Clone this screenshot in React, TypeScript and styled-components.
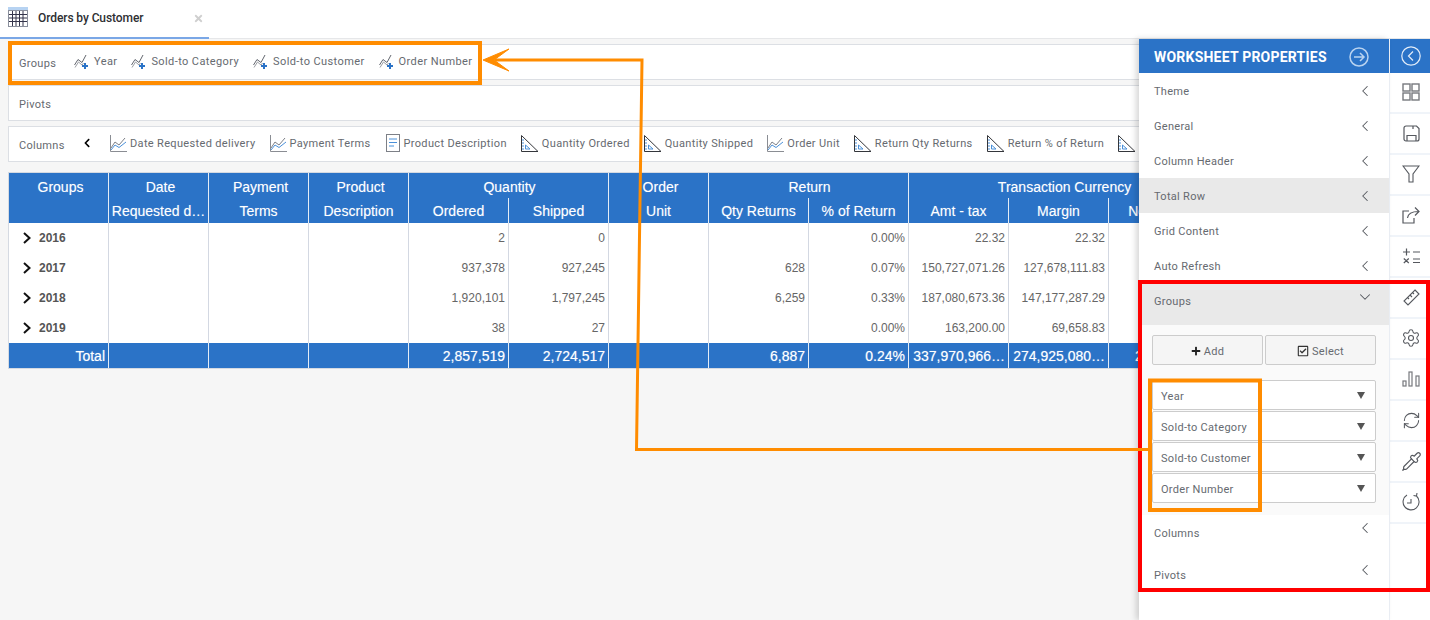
import React from 'react';
import styled, { createGlobalStyle } from 'styled-components';
import { ChevronDown, ChevronLeft, Settings, RefreshCw, Pipette } from 'lucide-react';
import { FaPlus, FaRegCheckSquare, FaChevronLeft, FaTimes } from 'react-icons/fa';

const GlobalStyle = createGlobalStyle`
    html, body {
        margin: 0;
        padding: 0;
        background: #f6f6f6;
    }
    * {
        box-sizing: border-box;
    }
`;

const uiFont = `Roboto, "Liberation Sans", sans-serif`;
const tableFont = `"Liberation Sans", Arial, sans-serif`;

const Page = styled.div`
    position: relative;
    width: 1430px;
    height: 620px;
    overflow: hidden;
    display: flex;
    flex-direction: column;
    background: #f6f6f6;
    font-family: ${uiFont};
`;

const TabBar = styled.div`
    flex: none;
    height: 39px;
    background: #fff;
    border-bottom: 1px solid #e6e7e9;
`;
const Tab = styled.div`
    width: 209px;
    height: 39px;
    display: flex;
    align-items: center;
    padding: 0 5px 3px 8px;
    border-bottom: 2px solid #7aa7e6;
`;
const TabTitle = styled.span`
    margin: 1px 0 0 10px;
    font-size: 12px;
    font-weight: 500;
    color: #2e2f33;
    letter-spacing: -0.09px;
    flex: 1;
`;
const TabClose = styled.span`
    display: flex;
    color: #cfcfcf;
    font-size: 11px;
    margin-top: 3px;
`;

const Body = styled.div`
    flex: 1;
    display: flex;
    min-height: 0;
`;
const Workspace = styled.div`
    width: 1139px;
    flex: none;
    overflow: hidden;
    padding: 5px 0 0 8px;
`;
const Toolbar = styled.div`
    width: 1160px;
    height: 36px;
    margin-bottom: 5px;
    display: flex;
    align-items: center;
    padding-left: 10px;
    background: #fff;
    border: 1px solid #dcdfe4;
    overflow: hidden;
    white-space: nowrap;
`;
const ToolbarLabel = styled.span<{ $width: number }>`
    flex: none;
    width: ${p => p.$width}px;
    font-size: 11px;
    letter-spacing: 0.3px;
    color: #666a70;
    padding-top: 2px;
`;
const ToolbarChevron = styled.span`
    display: flex;
    width: 28px;
    flex: none;
    font-size: 10px;
    color: #000;
    margin-top: -3px;
`;
const ToolItem = styled.span<{ $gap: number; $spacing: number }>`
    flex: none;
    display: flex;
    align-items: center;
    gap: ${p => p.$gap}px;
    margin-right: 14px;
    font-size: 11px;
    letter-spacing: ${p => p.$spacing}px;
    color: #666a70;
    margin-top: -2px;
`;

const TableWrap = styled.div`
    width: 1160px;
    margin-top: 10px;
    overflow: hidden;
    border: 1px solid #d5dae2;
    border-right: 0;
`;
const Grid = styled.table`
    width: 1200px;
    table-layout: fixed;
    border-collapse: separate;
    border-spacing: 0;
    font-family: ${tableFont};
`;
const HeadCell = styled.th<{ $left?: number; $right?: number }>`
    height: 25px;
    padding: 3px ${p => p.$right ?? 1}px 0 ${p => p.$left ?? 5}px;
    background: #2b73c7;
    color: #fff;
    font-size: 14px;
    font-weight: 400;
    text-align: center;
    border-right: 1px solid #e4ecf6;
    white-space: nowrap;
    overflow: hidden;
    text-shadow: 0 0 1px rgba(255, 255, 255, 0.35);
`;
const SubHeadCell = styled(HeadCell)`
    padding: 1px 2px 0;
`;
const Cell = styled.td`
    height: 30px;
    padding: 0 3px;
    background: #fff;
    color: #666;
    font-size: 12px;
    text-align: right;
    border-right: 1px solid #d3d8e2;
    white-space: nowrap;
    overflow: hidden;
`;
const YearCell = styled(Cell)`
    text-align: left;
    padding-left: 13px;
    color: #555;
    font-weight: 700;
`;
const YearInner = styled.span`
    display: flex;
    align-items: center;
    gap: 7px;
`;
const TotalCell = styled.td`
    height: 25px;
    padding: 0 3px;
    background: #2b73c7;
    color: #fff;
    font-size: 14px;
    font-weight: 400;
    text-align: right;
    border-right: 1px solid #e4ecf6;
    white-space: nowrap;
    overflow: hidden;
    text-shadow: 0 0 1px rgba(255, 255, 255, 0.5);
`;

const Panel = styled.aside`
    position: relative;
    z-index: 1;
    flex: none;
    width: 250px;
    background: #fff;
    box-shadow: -3px 0 6px rgba(0, 0, 0, 0.16);
`;
const PanelHeader = styled.div`
    height: 34px;
    display: flex;
    align-items: center;
    justify-content: space-between;
    padding: 2px 20px 0 15px;
    background: #2b73c7;
    color: #fff;
    font-size: 14px;
    font-weight: 700;
    letter-spacing: 0.22px;
`;
const SectionRow = styled.div<{ $active?: boolean }>`
    height: 35px;
    display: flex;
    align-items: center;
    justify-content: space-between;
    padding: 0 15px;
    background: ${p => (p.$active ? '#e9e9e9' : '#fff')};
    color: #666a70;
    font-size: 11px;
    letter-spacing: 0.3px;
`;
const SectionLabel = styled.span`
    margin-top: 2px;
`;
const TallRow = styled(SectionRow)`
    height: 42px;
    align-items: flex-start;
    padding-top: 10px;
`;
const RowChevron = styled.span`
    display: flex;
    color: #55585e;
    margin-right: 0;
`;
const TallChevron = styled(RowChevron)<{ $lift: number }>`
    margin-top: -${p => p.$lift}px;
`;
const GroupsBody = styled.div`
    height: 190px;
    padding: 10px 13px 0;
    background: #fafafa;
`;
const ButtonRow = styled.div`
    display: flex;
    gap: 2px;
    margin-bottom: 15px;
`;
const PanelButton = styled.button`
    flex: 1;
    height: 30px;
    display: flex;
    align-items: center;
    justify-content: center;
    gap: 3px;
    padding: 2px 0 0;
    background: #f5f5f5;
    border: 1px solid #ccc;
    border-radius: 2px;
    color: #666a70;
    font-family: ${uiFont};
    font-size: 11px;
    letter-spacing: 0.3px;
`;
const AddGlyph = styled.span`
    display: flex;
    color: #222;
    font-size: 10px;
`;
const SelectGlyph = styled.span`
    display: flex;
    color: #333;
    font-size: 12px;
`;
const SelectBox = styled.div`
    height: 30px;
    margin-bottom: 1px;
    display: flex;
    align-items: center;
    justify-content: space-between;
    padding: 3px 10px 0 8px;
    background: #fff;
    border: 1px solid #ccc;
    border-radius: 2px;
    color: #666a70;
    font-size: 11px;
    letter-spacing: 0.3px;
`;
const Caret = styled.span`
    width: 0;
    height: 0;
    margin-top: -3px;
    border-left: 4px solid transparent;
    border-right: 4px solid transparent;
    border-top: 7px solid #555;
`;

const Rail = styled.nav`
    flex: none;
    width: 41px;
    background: #fff;
    border-left: 1px solid #eef2f8;
`;
const RailHead = styled.div`
    height: 34px;
    display: flex;
    align-items: center;
    justify-content: center;
    padding-left: 2px;
    background: #2b73c7;
`;
const RailItem = styled.div`
    height: 41px;
    display: flex;
    align-items: center;
    justify-content: center;
    padding: 0 0 1px 2px;
    border-bottom: 2px solid #f0f4f9;
    color: #55585e;
`;

const Annotations = styled.svg`
    position: absolute;
    left: 0;
    top: 0;
    z-index: 2;
    pointer-events: none;
`;

const GridIcon = () => (
    <svg width="20" height="20" viewBox="0 0 20 20">
        <rect x="0" y="0" width="20" height="20" fill="#8a8f9c" />
        <rect x="0" y="0" width="20" height="3" fill="#b7d3f2" />
        <rect x="1" y="4" width="18" height="15" fill="#fff" />
        <path d="M1 7.5h18M1 11h18M1 14.5h18M4.5 4v15M8 4v15M11.5 4v15M15 4v15" stroke="#34344a" strokeWidth="1" fill="none" />
    </svg>
);

const GroupIcon = () => (
    <svg width="15" height="15" viewBox="0 0 15 15" fill="none">
        <path d="M0.5 11 L4 5.5 L8 8.5 L12 1" stroke="#62666e" strokeWidth="1" />
        <path d="M1 13.5 L4.5 8 L8 11 L9.5 9" stroke="#9a9da3" strokeWidth="1" />
        <path d="M11 9v6M8 12h6" stroke="#2b73c7" strokeWidth="2" />
    </svg>
);

const ChartIcon = () => (
    <svg width="17" height="17" viewBox="0 0 17 17" fill="none">
        <path d="M0.5 0v16.5H17" stroke="#8a8d93" strokeWidth="1" />
        <path d="M1 13 L5 7 L9 10 L15 3" stroke="#7d8087" strokeWidth="1" />
        <path d="M1 15 L5 10 L9 12.5 L16 7" stroke="#4a90d9" strokeWidth="1" />
    </svg>
);

const DocIcon = () => (
    <svg width="16" height="18" viewBox="0 0 16 18" fill="none">
        <rect x="1.5" y="0.5" width="13" height="17" stroke="#7d8087" />
        <path d="M4 5h8M4 8.5h8M4 12h5" stroke="#4a90d9" strokeWidth="1" />
    </svg>
);

const SquareIcon = () => (
    <svg width="18" height="17" viewBox="0 0 18 17" fill="none">
        <path d="M0.5 0.5 L17 16.5 H0.5 Z" stroke="#34363b" strokeWidth="1" />
        <path d="M4.5 10 L9 14 H4.5 Z" stroke="#4a90d9" strokeWidth="1" />
        <path d="M1 5h2M1 8h2M1 11h2M1 14h2" stroke="#4a90d9" strokeWidth="1" />
    </svg>
);

const ExpandIcon = () => (
    <svg width="10" height="12" viewBox="0 0 10 12" fill="none">
        <path d="M2 1 L7.5 6 L2 11" stroke="#111" strokeWidth="2" />
    </svg>
);

const CircleArrow = () => (
    <svg width="20" height="20" viewBox="0 0 20 20" fill="none" stroke="#b9d3f0" strokeWidth="1.5">
        <circle cx="10" cy="10" r="9" />
        <path d="M5 10h10M11 6l4 4-4 4" />
    </svg>
);
const CircleBack = () => (
    <svg width="20" height="20" viewBox="0 0 20 20" fill="none" stroke="#e3edf9" strokeWidth="1.2">
        <circle cx="10" cy="10" r="9.2" />
        <path d="M12 5.5 L7.5 10 L12 14.5" />
    </svg>
);
const TilesIcon = () => (
    <svg width="18" height="18" viewBox="0 0 18 18" fill="none" stroke="#77797e" strokeWidth="1.4">
        <rect x="1" y="1" width="7" height="7" />
        <rect x="10" y="1" width="7" height="7" />
        <rect x="1" y="10" width="7" height="7" />
        <rect x="10" y="10" width="7" height="7" />
    </svg>
);
const SaveIcon = () => (
    <svg width="17" height="17" viewBox="0 0 17 17" fill="none" stroke="#55585e" strokeWidth="1.2">
        <path d="M3 1h10.5L16 3.5V14a2 2 0 0 1-2 2H3a2 2 0 0 1-2-2V3a2 2 0 0 1 2-2Z" />
        <path d="M4 16v-5.5h9V16M10 1v3" />
    </svg>
);
const FunnelIcon = () => (
    <svg width="18" height="18" viewBox="0 0 18 18" fill="none" stroke="#55585e" strokeWidth="1.1">
        <path d="M1 1h16l-6 8v8H7V9Z" />
    </svg>
);
const ShareIcon = () => (
    <svg width="18" height="18" viewBox="0 0 18 18" fill="none" stroke="#55585e" strokeWidth="1.2">
        <path d="M7 5H1v12h11v-5" />
        <path d="M5.5 12c.5-4 3.5-6.5 11-6.5M13 1.5l4 4-4 4" />
    </svg>
);
const MathIcon = () => (
    <svg width="18" height="16" viewBox="0 0 18 16" fill="none" stroke="#55585e" strokeWidth="1.2">
        <path d="M1 4h7M4.5 0.5v7M11 4h7M1.8 10.5l5 4.5M6.8 10.5l-5 4.5M11 11h7M11 14.5h7" />
    </svg>
);
const RulerIcon = () => (
    <svg width="17" height="17" viewBox="0 0 17 17" fill="none" stroke="#55585e" strokeWidth="1.1">
        <path d="M12 1 L16 5 L5 16 L1 12 Z" />
        <path d="M4.5 8.5l1.5 1.5M7 6l2 2M9.5 3.5l1.5 1.5" />
    </svg>
);
const BarsIcon = () => (
    <svg width="18" height="16" viewBox="0 0 18 16" fill="none" stroke="#77797e" strokeWidth="1.2">
        <rect x="1" y="10" width="3" height="5" />
        <rect x="7" y="1" width="3" height="14" />
        <rect x="14" y="5" width="3" height="10" />
    </svg>
);
const ClockIcon = () => (
    <svg width="18" height="18" viewBox="0 0 18 18" fill="none" stroke="#55585e" strokeWidth="1.1">
        <path d="M5 2a8 8 0 1 0 9.5 1M11.5 2.5l3 .5.5-3" />
        <path d="M9 6v4H5" />
    </svg>
);

const groupItems = ['Year', 'Sold-to Category', 'Sold-to Customer', 'Order Number'];

const columnItems: [string, React.FC][] = [
    ['Date Requested delivery', ChartIcon],
    ['Payment Terms', ChartIcon],
    ['Product Description', DocIcon],
    ['Quantity Ordered', SquareIcon],
    ['Quantity Shipped', SquareIcon],
    ['Order Unit', ChartIcon],
    ['Return Qty Returns', SquareIcon],
    ['Return % of Return', SquareIcon],
    ['', SquareIcon],
];

const sections = ['Theme', 'General', 'Column Header', 'Total Row', 'Grid Content', 'Auto Refresh'];

const rows = [
    { year: '2016', values: ['2', '0', '', '', '0.00%', '22.32', '22.32', ''] },
    { year: '2017', values: ['937,378', '927,245', '', '628', '0.07%', '150,727,071.26', '127,678,111.83', ''] },
    { year: '2018', values: ['1,920,101', '1,797,245', '', '6,259', '0.33%', '187,080,673.36', '147,177,287.29', ''] },
    { year: '2019', values: ['38', '27', '', '', '0.00%', '163,200.00', '69,658.83', ''] },
];
const totals = ['2,857,519', '2,724,517', '', '6,887', '0.24%', '337,970,966…', '274,925,080…', '245,586.77'];

const railIcons = [
    <TilesIcon />,
    <SaveIcon />,
    <FunnelIcon />,
    <ShareIcon />,
    <MathIcon />,
    <RulerIcon />,
    <Settings size={20} strokeWidth={1.3} />,
    <BarsIcon />,
    <RefreshCw size={19} strokeWidth={1.3} />,
    <Pipette size={21} strokeWidth={1.3} />,
    <ClockIcon />,
];

const App = () => (
    <Page>
        <GlobalStyle />
        <TabBar>
            <Tab>
                <GridIcon />
                <TabTitle>Orders by Customer</TabTitle>
                <TabClose><FaTimes /></TabClose>
            </Tab>
        </TabBar>
        <Body>
            <Workspace>
                <Toolbar>
                    <ToolbarLabel $width={55}>Groups</ToolbarLabel>
                    {groupItems.map(item => (
                        <ToolItem key={item} $gap={5} $spacing={0.4}><GroupIcon />{item}</ToolItem>
                    ))}
                </Toolbar>
                <Toolbar>
                    <ToolbarLabel $width={55}>Pivots</ToolbarLabel>
                </Toolbar>
                <Toolbar>
                    <ToolbarLabel $width={63}>Columns</ToolbarLabel>
                    <ToolbarChevron><FaChevronLeft /></ToolbarChevron>
                    {columnItems.map(([label, Icon], i) => (
                        <ToolItem key={i} $gap={3} $spacing={0.34}><Icon />{label}</ToolItem>
                    ))}
                </Toolbar>
                <TableWrap>
                    <Grid>
                        <colgroup>
                            {Array.from({ length: 12 }, (_, i) => <col key={i} width={100} />)}
                        </colgroup>
                        <thead>
                            <tr>
                                <HeadCell>Groups</HeadCell>
                                <HeadCell>Date</HeadCell>
                                <HeadCell>Payment</HeadCell>
                                <HeadCell>Product</HeadCell>
                                <HeadCell colSpan={2} $left={4} $right={2}>Quantity</HeadCell>
                                <HeadCell>Order</HeadCell>
                                <HeadCell colSpan={2} $left={4} $right={2}>Return</HeadCell>
                                <HeadCell colSpan={3} $left={15} $right={3}>Transaction Currency</HeadCell>
                            </tr>
                            <tr>
                                <SubHeadCell />
                                <SubHeadCell>Requested d…</SubHeadCell>
                                <SubHeadCell>Terms</SubHeadCell>
                                <SubHeadCell>Description</SubHeadCell>
                                <SubHeadCell>Ordered</SubHeadCell>
                                <SubHeadCell>Shipped</SubHeadCell>
                                <SubHeadCell>Unit</SubHeadCell>
                                <SubHeadCell>Qty Returns</SubHeadCell>
                                <SubHeadCell>% of Return</SubHeadCell>
                                <SubHeadCell>Amt - tax</SubHeadCell>
                                <SubHeadCell>Margin</SubHeadCell>
                                <SubHeadCell>Net Sales</SubHeadCell>
                            </tr>
                        </thead>
                        <tbody>
                            {rows.map(row => (
                                <tr key={row.year}>
                                    <YearCell>
                                        <YearInner><ExpandIcon />{row.year}</YearInner>
                                    </YearCell>
                                    <Cell />
                                    <Cell />
                                    <Cell />
                                    {row.values.map((value, i) => <Cell key={i}>{value}</Cell>)}
                                </tr>
                            ))}
                            <tr>
                                <TotalCell>Total</TotalCell>
                                <TotalCell />
                                <TotalCell />
                                <TotalCell />
                                {totals.map((value, i) => <TotalCell key={i}>{value}</TotalCell>)}
                            </tr>
                        </tbody>
                    </Grid>
                </TableWrap>
            </Workspace>
            <Panel>
                <PanelHeader>
                    WORKSHEET PROPERTIES
                    <CircleArrow />
                </PanelHeader>
                {sections.map(section => (
                    <SectionRow key={section} $active={section === 'Total Row'}>
                        <SectionLabel>{section}</SectionLabel>
                        <RowChevron><ChevronLeft size={18} strokeWidth={1.4} /></RowChevron>
                    </SectionRow>
                ))}
                <TallRow $active>
                    <SectionLabel>Groups</SectionLabel>
                    <TallChevron $lift={5}><ChevronDown size={18} strokeWidth={1.4} /></TallChevron>
                </TallRow>
                <GroupsBody>
                    <ButtonRow>
                        <PanelButton><AddGlyph><FaPlus /></AddGlyph>Add</PanelButton>
                        <PanelButton><SelectGlyph><FaRegCheckSquare /></SelectGlyph>Select</PanelButton>
                    </ButtonRow>
                    {groupItems.map(item => (
                        <SelectBox key={item}>{item}<Caret /></SelectBox>
                    ))}
                </GroupsBody>
                <TallRow>
                    <SectionLabel>Columns</SectionLabel>
                    <TallChevron $lift={6}><ChevronLeft size={18} strokeWidth={1.4} /></TallChevron>
                </TallRow>
                <TallRow>
                    <SectionLabel>Pivots</SectionLabel>
                    <TallChevron $lift={6}><ChevronLeft size={18} strokeWidth={1.4} /></TallChevron>
                </TallRow>
            </Panel>
            <Rail>
                <RailHead><CircleBack /></RailHead>
                {railIcons.map((icon, i) => <RailItem key={i}>{icon}</RailItem>)}
            </Rail>
        </Body>
        <Annotations width="1430" height="620" viewBox="0 0 1430 620" fill="none">
            <rect x="10" y="43" width="470" height="40" stroke="#ff8c00" strokeWidth="4" />
            <rect x="1150" y="380.5" width="110" height="129.5" stroke="#ff8c00" strokeWidth="4" />
            <rect x="1140" y="282" width="288" height="308" stroke="#ff0000" strokeWidth="4" />
            <path d="M495 60 H642 L636.5 449.5 H1150" stroke="#ff8c00" strokeWidth="3" />
            <path d="M483 60 L509 49 L494 60 L509 71 Z" fill="#ff8c00" stroke="#ff8c00" strokeWidth="1" />
        </Annotations>
    </Page>
);

export default App;
